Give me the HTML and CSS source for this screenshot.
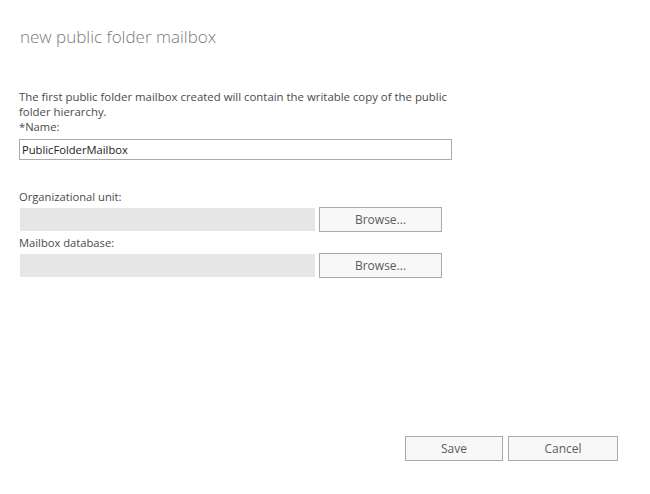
FILE: index.html
```html
<!DOCTYPE html>
<html>
<head>
<meta charset="utf-8">
<link rel="stylesheet" href="styles.css">
</head>
<body>
<div class="dialog">
  <h1 class="title">new public folder mailbox</h1>
  <div class="form">
    <p class="intro">The first public folder mailbox created will contain the writable copy of the public folder hierarchy.</p>
    <label class="label">*Name:</label>
    <input class="text-input" type="text" value="PublicFolderMailbox">
    <label class="label label-gap">Organizational unit:</label>
    <div class="browse-row">
      <div class="readonly-box"></div>
      <button class="btn browse">Browse...</button>
    </div>
    <label class="label">Mailbox database:</label>
    <div class="browse-row">
      <div class="readonly-box"></div>
      <button class="btn browse">Browse...</button>
    </div>
  </div>
  <div class="footer">
    <button class="btn footer-btn save">Save</button>
    <button class="btn footer-btn cancel">Cancel</button>
  </div>
</div>
</body>
</html>
```

FILE: styles.css
```css
html, body {
  margin: 0;
  padding: 0;
  background: #ffffff;
}
body {
  font-family: "Open Sans", "Noto Sans", sans-serif;
  color: #444444;
  width: 650px;
  height: 494px;
  overflow: hidden;
}
.dialog {
  padding: 24px 0 0 19px;
  display: flex;
  flex-direction: column;
  height: 461px;
  box-sizing: border-box;
}
.title {
  margin: 0;
  font-size: 17px;
  font-weight: 300;
  color: #7a7a7a;
  line-height: 26px;
  padding-left: 1px;
}
.form {
  display: flex;
  flex-direction: column;
  margin-top: 39px;
  width: 433px;
}
.intro {
  margin: 0;
  font-size: 11.4px;
  line-height: 15px;
  color: #4a4a4a;
}
.label {
  font-size: 11.2px;
  line-height: 15px;
  color: #4a4a4a;
  display: block;
}
.label-gap {
  margin-top: 29px;
}
.text-input {
  margin: 5px 0 0 0;
  width: 433px;
  height: 21px;
  box-sizing: border-box;
  border: 1px solid #ababab;
  padding: 0 2px;
  font-family: "Open Sans", "Noto Sans", sans-serif;
  font-size: 11.2px;
  color: #222222;
  outline: none;
}
.browse-row {
  display: flex;
  align-items: center;
  gap: 4px;
  margin: 3px 0 3px 0;
}
.readonly-box {
  width: 295px;
  height: 23px;
  background: #e6e6e6;
  margin-left: 1px;
}
.btn {
  font-family: "Open Sans", "Noto Sans", sans-serif;
  font-size: 12px;
  color: #5c5c5c;
  background: #f8f8f8;
  border: 1px solid #a9a9a9;
  padding: 0;
  box-sizing: border-box;
}
.browse {
  width: 123px;
  height: 25px;
}
.footer {
  margin-top: auto;
  display: flex;
  gap: 5px;
  padding-left: 386px;
}
.footer-btn {
  height: 25px;
}
.save {
  width: 98px;
}
.cancel {
  width: 110px;
}
```
